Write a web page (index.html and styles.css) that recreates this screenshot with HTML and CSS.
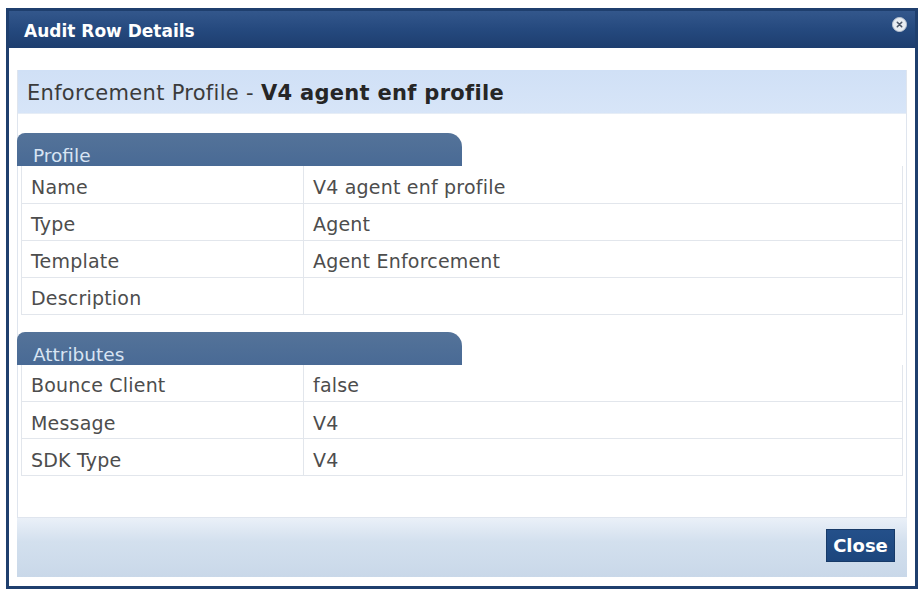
FILE: index.html
```html
<!DOCTYPE html>
<html lang="en">
<head>
    <meta charset="UTF-8">
    <title>Audit Row Details</title>
    <link rel="stylesheet" href="styles.css">
</head>
<body>
    <div class="dialog">
        <div class="dialog-title">
            <span>Audit Row Details</span>
            <span class="close-icon">
                <svg width="15" height="15" viewBox="0 0 15 15">
                    <circle cx="7.5" cy="7.5" r="7" fill="#e9edf2" stroke="#b9c3d0" stroke-width="1"/>
                    <path d="M5.3 5.3 L9.7 9.7 M9.7 5.3 L5.3 9.7" stroke="#4a5566" stroke-width="1.6" stroke-linecap="round"/>
                </svg>
            </span>
        </div>

        <div class="dialog-body">
            <div class="content">
                <div class="content-heading">
                    Enforcement Profile - <b>V4 agent enf profile</b>
                </div>

                <div class="section">
                    <div class="section-tab">Profile</div>
                    <table class="details">
                        <colgroup><col class="label-col"><col></colgroup>
                        <tr><td>Name</td><td>V4 agent enf profile</td></tr>
                        <tr><td>Type</td><td>Agent</td></tr>
                        <tr><td>Template</td><td>Agent Enforcement</td></tr>
                        <tr><td>Description</td><td></td></tr>
                    </table>
                </div>

                <div class="section">
                    <div class="section-tab">Attributes</div>
                    <table class="details">
                        <colgroup><col class="label-col"><col></colgroup>
                        <tr><td>Bounce Client</td><td>false</td></tr>
                        <tr><td>Message</td><td>V4</td></tr>
                        <tr><td>SDK Type</td><td>V4</td></tr>
                    </table>
                </div>
            </div>

            <div class="dialog-footer">
                <button class="btn-close">Close</button>
            </div>
        </div>
    </div>
</body>
</html>
```

FILE: styles.css
```css
body {
    margin: 0;
    padding: 0;
    background: #ffffff;
    font-family: "DejaVu Sans", Verdana, sans-serif;
}

.dialog {
    box-sizing: border-box;
    width: 912px;
    height: 581px;
    margin: 8px 0 0 6px;
    border: 3px solid #1f3f6e;
    background: #ffffff;
    display: flex;
    flex-direction: column;
}

.dialog-title {
    height: 37px;
    display: flex;
    align-items: center;
    justify-content: space-between;
    padding: 3px 8px 0 15px;
    box-sizing: border-box;
    background: linear-gradient(#33578c 0%, #25497e 50%, #1d3e6f 100%);
    color: #ffffff;
    font-size: 17px;
    font-weight: bold;
}

.close-icon {
    display: flex;
    margin-top: -14px;
}

.dialog-body {
    flex: 1;
    display: flex;
    flex-direction: column;
    padding: 22px 8px 9px 8px;
}

.content {
    height: 448px;
    box-sizing: border-box;
    border: 1px solid #dfe5ee;
    border-top: none;
}

.content-heading {
    height: 44px;
    box-sizing: border-box;
    padding: 11px 9px 0;
    background: linear-gradient(#d0e0f6, #d7e5f8);
    border-bottom: 1px solid #e6edf6;
    color: #3b3b3b;
    font-size: 21px;
    letter-spacing: 0.3px;
}

.content-heading b {
    color: #262626;
}

.section {
    margin-top: 19px;
}

.section + .section {
    margin-top: 17px;
}

.section-tab {
    width: 445px;
    height: 33px;
    box-sizing: border-box;
    display: flex;
    align-items: flex-end;
    padding: 0 16px 0;
    margin-left: -1px;
    border-radius: 8px 14px 0 0;
    background: linear-gradient(#547399, #496a95);
    color: #d8e4f3;
    font-size: 18.5px;
    line-height: 20px;
}

.details {
    width: calc(100% - 6px);
    margin: 0 3px;
    border-collapse: collapse;
    table-layout: fixed;
    font-size: 19px;
    letter-spacing: 0.2px;
    color: #4d4d4d;
}

.label-col {
    width: 282px;
}

.details td {
    height: 37px;
    box-sizing: border-box;
    padding: 5px 9px 0;
    border: 1px solid #e2e6ec;
    border-top: none;
    white-space: nowrap;
}

.dialog-footer {
    height: 59px;
    box-sizing: border-box;
    display: flex;
    justify-content: flex-end;
    align-items: flex-start;
    padding: 11px 12px 0;
    background: linear-gradient(#eaf0f8 0%, #d3e0ee 40%, #c9d8e9 100%);
}

.btn-close {
    width: 69px;
    height: 33px;
    padding: 0;
    border: 1px solid #173a68;
    background: linear-gradient(#24508a, #1c467d);
    color: #ffffff;
    font-family: "DejaVu Sans", Verdana, sans-serif;
    font-size: 18px;
    font-weight: bold;
    cursor: pointer;
}
```
